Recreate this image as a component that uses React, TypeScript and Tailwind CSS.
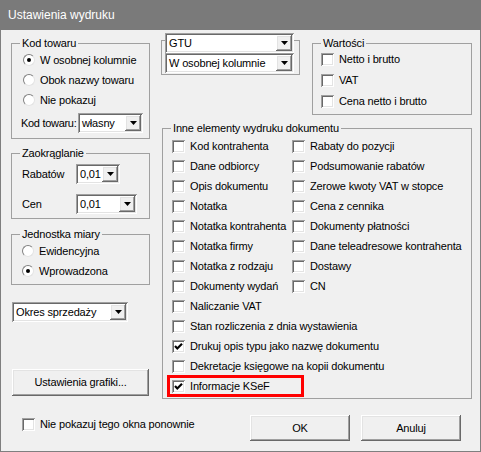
import React from "react";

const sunken =
  "shadow-[inset_1px_1px_0_#a0a0a0,inset_-1px_-1px_0_#ffffff,inset_2px_2px_0_#696969,inset_-2px_-2px_0_#e3e3e3]";
const raised =
  "shadow-[inset_-1px_-1px_0_#696969,inset_1px_1px_0_#ffffff,inset_-2px_-2px_0_#a0a0a0,inset_2px_2px_0_#e3e3e3]";

function Check({ checked = false }: { checked?: boolean }) {
  return (
    <span
      className={`w-[13px] h-[13px] shrink-0 bg-white flex items-center justify-center ${sunken}`}
    >
      {checked && (
        <svg width="9" height="9" viewBox="0 0 9 9">
          <polyline
            points="1,4 3.3,6.5 8,1.8"
            fill="none"
            stroke="#000"
            strokeWidth="2.2"
          />
        </svg>
      )}
    </span>
  );
}

function Radio({ checked = false }: { checked?: boolean }) {
  return (
    <span className="w-[12px] h-[12px] shrink-0 rounded-full bg-white border border-t-[#808080] border-l-[#808080] border-b-[#e3e3e3] border-r-[#e3e3e3] flex items-center justify-center">
      {checked && <span className="w-[4px] h-[4px] rounded-full bg-black" />}
    </span>
  );
}

function Combo({ value, className = "" }: { value: string; className?: string }) {
  return (
    <div className={`flex items-stretch h-[20px] shrink-0 bg-white p-[2px] ${sunken} ${className}`}>
      <span className="flex-1 pl-[2px] flex items-center whitespace-nowrap overflow-hidden">
        {value}
      </span>
      <span
        className={`w-[16px] shrink-0 bg-[#f0f0f0] flex items-center justify-center ${raised}`}
      >
        <svg width="7" height="4" viewBox="0 0 7 4">
          <path d="M0 0h7L3.5 4z" fill="#000" />
        </svg>
      </span>
    </div>
  );
}

function Btn({ label, className = "" }: { label: string; className?: string }) {
  return (
    <div
      className={`flex items-center justify-center bg-[#f0f0f0] ${raised} ${className}`}
    >
      {label}
    </div>
  );
}

function Group({
  title,
  className = "",
  children,
}: {
  title: string;
  className?: string;
  children: React.ReactNode;
}) {
  return (
    <fieldset className={`border border-[#a0a0a0] ${className}`}>
      <legend className="ml-[8px] px-[2px] leading-[13px]">{title}</legend>
      {children}
    </fieldset>
  );
}

function CheckRow({
  label,
  checked,
  className = "",
}: {
  label: string;
  checked?: boolean;
  className?: string;
}) {
  return (
    <div className={`flex items-center gap-[5px] whitespace-nowrap ${className}`}>
      <Check checked={checked} />
      <span>{label}</span>
    </div>
  );
}

function RadioRow({ label, checked }: { label: string; checked?: boolean }) {
  return (
    <div className="flex items-center gap-[5px] h-[20px]">
      <Radio checked={checked} />
      <span>{label}</span>
    </div>
  );
}

const pairs = [
  ["Kod kontrahenta", "Rabaty do pozycji"],
  ["Dane odbiorcy", "Podsumowanie rabatów"],
  ["Opis dokumentu", "Zerowe kwoty VAT w stopce"],
  ["Notatka", "Cena z cennika"],
  ["Notatka kontrahenta", "Dokumenty płatności"],
  ["Notatka firmy", "Dane teleadresowe kontrahenta"],
  ["Notatka z rodzaju", "Dostawy"],
  ["Dokumenty wydań", "CN"],
];

export default function App() {
  return (
    <div className="w-[481px] h-[452px] flex flex-col bg-[#f0f0f0] text-black text-[11px] leading-[13px] tracking-[-0.15px] font-['Liberation_Sans',Arial,sans-serif]">
      {/* title bar */}
      <div className="h-[30px] shrink-0 bg-[#7a7a7a] text-white text-[12px] tracking-normal flex items-center pl-[8px]">
        Ustawienia wydruku
      </div>

      <div className="flex-1 flex flex-col border-x border-b border-[#7f7f7f]">
        <div className="flex pl-[10px]">
          {/* left column */}
          <div className="w-[139px] flex flex-col">
            <Group title="Kod towaru" className="mt-[7px]">
              <div className="pl-[11px] pb-[5px]">
                <RadioRow label="W osobnej kolumnie" checked />
                <RadioRow label="Obok nazwy towaru" />
                <RadioRow label="Nie pokazuj" />
                <div className="flex items-center mt-[3px] -ml-[2px]">
                  <span className="w-[57px] shrink-0 whitespace-nowrap tracking-[-0.3px]">Kod towaru:</span>
                  <Combo value="własny" className="w-[65px]" />
                </div>
              </div>
            </Group>

            <Group title="Zaokrąglanie" className="mt-[8px]">
              <div className="pl-[10px] pb-[4px]">
                <div className="flex items-center mt-[4px]">
                  <span className="w-[54px]">Rabatów</span>
                  <Combo value="0,01" className="w-[44px]" />
                </div>
                <div className="flex items-center mt-[10px]">
                  <span className="w-[54px]">Cen</span>
                  <Combo value="0,01" className="w-[61px]" />
                </div>
              </div>
            </Group>

            <Group title="Jednostka miary" className="mt-[9px]">
              <div className="pl-[10px] pb-[3px]">
                <RadioRow label="Ewidencyjna" />
                <RadioRow label="Wprowadzona" checked />
              </div>
            </Group>

            <Combo value="Okres sprzedaży" className="mt-[17px] ml-[1px] w-[116px]" />

            <Btn label="Ustawienia grafiki..." className="mt-[47px] ml-[1px] w-[137px] h-[27px]" />
          </div>

          {/* right column */}
          <div className="ml-[11px] w-[311px] flex flex-col">
            <div className="flex items-start">
              <div className="mt-[10px] w-[139px] border border-[#a0a0a0] pb-[1px]">
                <div className="-mt-[8px] pl-[3px]">
                  <Combo value="GTU" className="w-[129px]" />
                  <Combo value="W osobnej kolumnie" className="w-[129px]" />
                </div>
              </div>

              <Group title="Wartości" className="ml-[12px] mt-[7px] w-[160px]">
                <div className="pl-[8px] -mt-[1px] pb-[2px]">
                  <CheckRow label="Netto i brutto" className="h-[21px]" />
                  <CheckRow label="VAT" className="h-[21px]" />
                  <CheckRow label="Cena netto i brutto" className="h-[21px]" />
                </div>
              </Group>
            </div>

            <Group title="Inne elementy wydruku dokumentu" className="mt-[7px] ml-[1px] w-[310px]">
              <div className="pl-[9px] pt-[1px] pb-[3px]">
                <div className="grid grid-cols-[120px_1fr]">
                  {pairs.map(([a, b]) => (
                    <React.Fragment key={a}>
                      <CheckRow label={a} className="h-[20px]" />
                      <CheckRow label={b} className="h-[20px]" />
                    </React.Fragment>
                  ))}
                </div>
                <CheckRow label="Naliczanie VAT" className="h-[20px]" />
                <CheckRow label="Stan rozliczenia z dnia wystawienia" className="h-[20px]" />
                <CheckRow label="Drukuj opis typu jako nazwę dokumentu" checked className="h-[20px]" />
                <CheckRow label="Dekretacje księgowe na kopii dokumentu" className="h-[20px]" />
                <div className="h-[20px]">
                  <CheckRow
                    label="Informacje KSeF"
                    checked
                    className="h-[22px] -mt-[1px] w-[137px] -ml-[5px] pl-[2px] border-[3px] border-[#ff0000]"
                  />
                </div>
              </div>
            </Group>
          </div>
        </div>

        {/* bottom row */}
        <div className="flex items-start mt-[16px] pl-[21px] pr-[19px]">
          <CheckRow label="Nie pokazuj tego okna ponownie" className="h-[18px]" />
          <Btn label="OK" className="ml-auto w-[100px] h-[26px]" />
          <Btn label="Anuluj" className="ml-[11px] w-[100px] h-[26px]" />
        </div>
      </div>
    </div>
  );
}
